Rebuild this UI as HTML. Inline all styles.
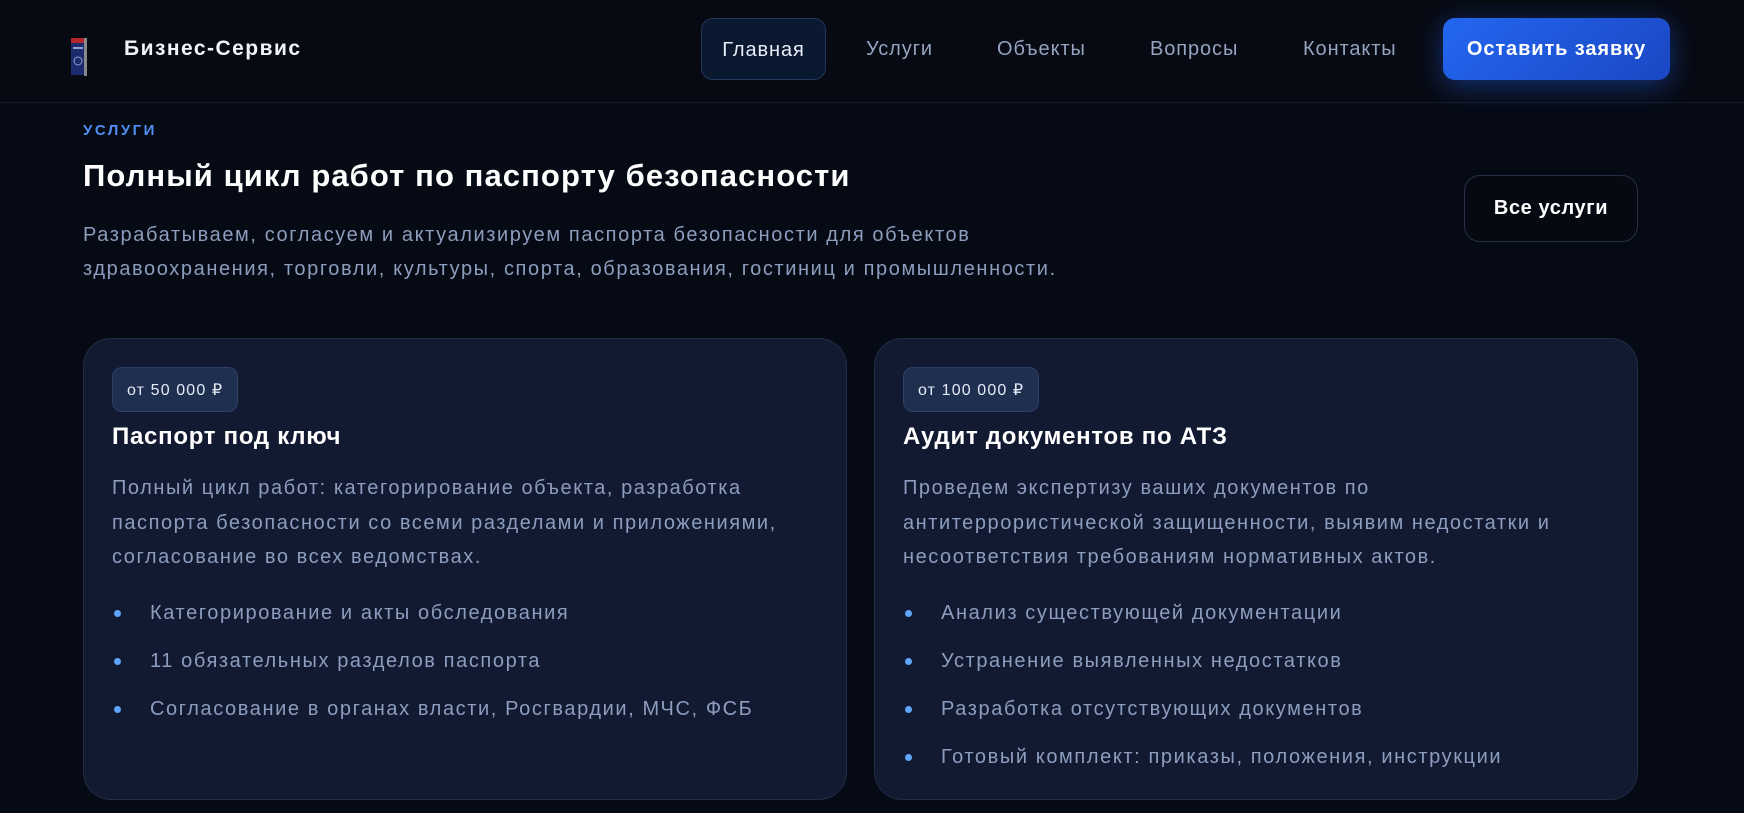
<!DOCTYPE html>
<html><head><meta charset="utf-8"><style>
*{margin:0;padding:0;box-sizing:border-box}
body{width:1744px;height:813px;overflow:hidden;background:#060a14;font-family:"Liberation Sans",sans-serif;position:relative;color:#fff;letter-spacing:0.065em}
.hdr{position:absolute;left:0;top:0;width:1744px;height:103px;background:#070a12;border-bottom:1px solid #151b28}
.a{position:absolute;white-space:nowrap}
.nav{position:absolute;top:18px;height:62px;line-height:62px;font-size:20px;color:#94a3bf;letter-spacing:0.045em}
.card{position:absolute;top:338px;width:764px;height:462px;background:#111a31;border:1px solid #222d47;border-radius:28px}
.badge{position:absolute;left:28px;top:28px;height:45px;line-height:45px;padding:0 14px;background:#1f2f50;border:1px solid #2d4066;border-radius:10px;font-size:16px;color:#e4ebf7;letter-spacing:0.07em}
.ct{position:absolute;left:28px;top:80px;font-size:24px;font-weight:bold;line-height:36px;letter-spacing:0.03em}
.cd{position:absolute;left:28px;top:132px;font-size:20px;line-height:34.5px;color:#8c9dbd;width:730px;white-space:nowrap;letter-spacing:1.55px}
.li{position:absolute;left:66px;font-size:20px;color:#8c9dbd;line-height:30px;white-space:nowrap;letter-spacing:1.6px}
.li:before{content:"";position:absolute;left:-36px;top:12px;width:7px;height:7px;border-radius:50%;background:#60a5fa}
</style></head><body>
<div class="hdr"></div>
<svg class="a" style="left:68px;top:36px" width="22" height="42" viewBox="0 0 22 42"><rect x="3" y="2" width="15" height="37" fill="#1c2a6e"/><rect x="3" y="2" width="15" height="5" fill="#b3262b"/><rect x="16" y="2" width="3" height="38" fill="#888"/><circle cx="10" cy="25" r="4" fill="none" stroke="#8fa0d0" stroke-width="1"/><rect x="5" y="11" width="10" height="2" fill="#8fa0d0"/></svg>
<div class="a" style="left:124px;top:37px;font-size:21px;font-weight:bold;line-height:24px;color:#f1f4fa;letter-spacing:0.07em">Бизнес-Сервис</div>
<div class="nav" style="left:701px;width:125px;text-align:center;background:#0a1830;border:1px solid #22385e;border-radius:12px;color:#e8eef8">Главная</div>
<div class="nav" style="left:866px">Услуги</div>
<div class="nav" style="left:997px">Объекты</div>
<div class="nav" style="left:1150px">Вопросы</div>
<div class="nav" style="left:1303px">Контакты</div>
<div class="nav" style="left:1443px;width:227px;text-align:center;background:linear-gradient(135deg,#2367f0,#1b47c4);border-radius:12px;color:#fff;font-weight:bold;box-shadow:0 6px 28px rgba(37,99,235,.45);letter-spacing:0.045em">Оставить заявку</div>
<div class="a" style="left:83px;top:122px;font-size:15px;font-weight:bold;letter-spacing:2.5px;color:#4f8ff0">УСЛУГИ</div>
<div class="a" style="left:83px;top:157px;font-size:31px;font-weight:bold;line-height:38px;letter-spacing:0.035em">Полный цикл работ по паспорту безопасности</div>
<div class="a" style="left:83px;top:218px;font-size:20px;line-height:34px;color:#8c9dbd;letter-spacing:1.6px">Разрабатываем, согласуем и актуализируем паспорта безопасности для объектов<br>здравоохранения, торговли, культуры, спорта, образования, гостиниц и промышленности.</div>
<div class="a" style="left:1464px;top:175px;width:174px;height:67px;line-height:65px;text-align:center;border:1px solid #263047;border-radius:16px;background:#060911;font-size:20px;font-weight:bold;letter-spacing:0.03em">Все услуги</div>
<div class="card" style="left:83px">
<div class="badge">от 50 000 ₽</div>
<div class="ct">Паспорт под ключ</div>
<div class="cd">Полный цикл работ: категорирование объекта, разработка<br>паспорта безопасности со всеми разделами и приложениями,<br>согласование во всех ведомствах.</div>
<div class="li" style="top:259px">Категорирование и акты обследования</div>
<div class="li" style="top:307px">11 обязательных разделов паспорта</div>
<div class="li" style="top:355px">Согласование в органах власти, Росгвардии, МЧС, ФСБ</div>
</div>
<div class="card" style="left:874px">
<div class="badge">от 100 000 ₽</div>
<div class="ct">Аудит документов по АТЗ</div>
<div class="cd">Проведем экспертизу ваших документов по<br>антитеррористической защищенности, выявим недостатки и<br>несоответствия требованиям нормативных актов.</div>
<div class="li" style="top:259px">Анализ существующей документации</div>
<div class="li" style="top:307px">Устранение выявленных недостатков</div>
<div class="li" style="top:355px">Разработка отсутствующих документов</div>
<div class="li" style="top:403px">Готовый комплект: приказы, положения, инструкции</div>
</div>
</body></html>
